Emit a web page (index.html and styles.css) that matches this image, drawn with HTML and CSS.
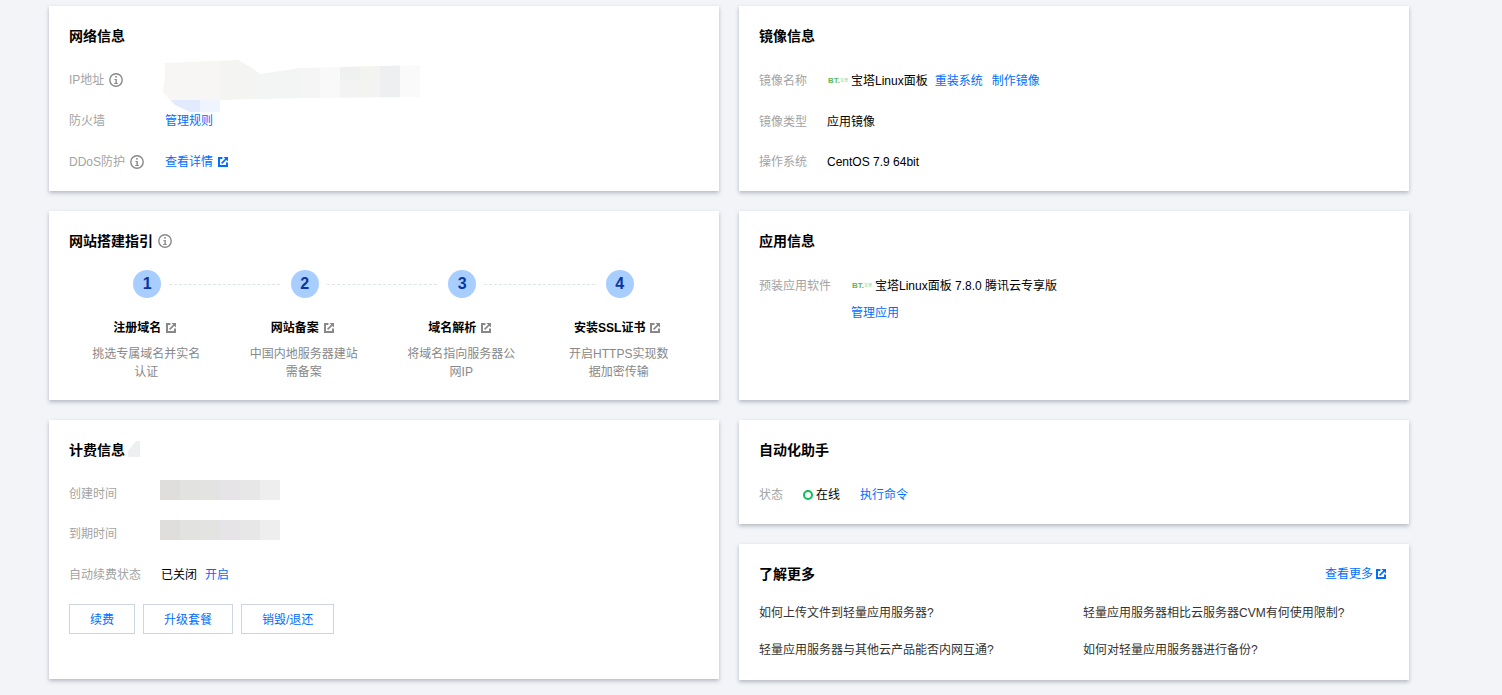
FILE: index.html
```html
<!DOCTYPE html>
<html lang="zh-CN">
<head>
    <meta charset="UTF-8">
    <meta name="viewport" content="width=device-width, initial-scale=1.0">
    <title>轻量应用服务器</title>
    <link rel="stylesheet" href="styles.css">
</head>
<body>
    <svg class="defs" width="0" height="0">
        <defs>
            <symbol id="info" viewBox="0 0 14 14">
                <circle cx="7" cy="7" r="6.2" fill="none" stroke="currentColor" stroke-width="1.4"/>
                <rect x="6.2" y="3" width="1.6" height="1.6" fill="currentColor"/>
                <path d="M5.4 6h2.4v4h1v1H5.2v-1h1.2V7h-1z" fill="currentColor"/>
            </symbol>
            <symbol id="ext" viewBox="0 0 10 10">
                <path d="M4.4 1H1v8h8V5.6" fill="none" stroke="currentColor" stroke-width="2"/>
                <path d="M3.6 6.4 8.4 1.6" fill="none" stroke="currentColor" stroke-width="1.6"/>
                <path d="M5.4 0H10v4.6z" fill="currentColor"/>
            </symbol>
        </defs>
    </svg>

    <main class="page">
        <section class="card">
            <h2 class="title">网络信息</h2>
            <div class="row gap21">
                <span class="label w96">IP地址<svg class="info"><use href="#info"/></svg></span>
                <span class="value ip">
                    <svg class="ip-blur" width="260" height="55" viewBox="0 0 260 55">
                        <defs>
                            <clipPath id="blob"><path d="M2 3 75 0 89 8 97 14 137 8 257 5V37L137 38 57 40V52H27L12 45 0 32 2 15z"/></clipPath>
                        </defs>
                        <g clip-path="url(#blob)">
                            <rect x="0" y="0" width="57" height="40" fill="#f7f6f5"/>
                            <rect x="57" y="0" width="40" height="40" fill="#f4f4f2"/>
                            <rect x="97" y="0" width="40" height="40" fill="#f3f5f5"/>
                            <rect x="137" y="0" width="20" height="40" fill="#f5f5f5"/>
                            <rect x="157" y="0" width="20" height="40" fill="#f9f9f9"/>
                            <rect x="177" y="0" width="20" height="20" fill="#eff0f0"/>
                            <rect x="177" y="20" width="20" height="20" fill="#f3f3f3"/>
                            <rect x="197" y="0" width="20" height="40" fill="#f3f3f2"/>
                            <rect x="217" y="0" width="20" height="40" fill="#eeeff0"/>
                            <rect x="237" y="0" width="20" height="40" fill="#fafafa"/>
                            <rect x="5" y="40" width="32" height="15" fill="#e2ebfd"/>
                            <rect x="37" y="40" width="20" height="15" fill="#eff4fe"/>
                        </g>
                    </svg>
                </span>
            </div>
            <div class="row gap21">
                <span class="label w96">防火墙</span>
                <a class="link" href="#">管理规则</a>
            </div>
            <div class="row">
                <span class="label w96">DDoS防护<svg class="info"><use href="#info"/></svg></span>
                <a class="link" href="#">查看详情<svg class="ext"><use href="#ext"/></svg></a>
            </div>
        </section>

        <section class="card">
            <h2 class="title mb25">镜像信息</h2>
            <div class="row gap21">
                <span class="label w68">镜像名称</span>
                <span class="bt"><b>BT.</b><i>宝塔</i></span>
                <span class="value">宝塔Linux面板</span>
                <a class="link ml7" href="#">重装系统</a>
                <a class="link ml9" href="#">制作镜像</a>
            </div>
            <div class="row">
                <span class="label w68">镜像类型</span>
                <span class="value">应用镜像</span>
            </div>
            <div class="row">
                <span class="label w68">操作系统</span>
                <span class="value">CentOS 7.9 64bit</span>
            </div>
        </section>

        <section class="card">
            <h2 class="title">网站搭建指引<svg class="info"><use href="#info"/></svg></h2>
            <div class="dots">
                <span class="dot">1</span><span class="dash"></span>
                <span class="dot">2</span><span class="dash"></span>
                <span class="dot">3</span><span class="dash"></span>
                <span class="dot">4</span>
            </div>
            <div class="steps">
                <div class="step">
                    <h3>注册域名<svg class="ext"><use href="#ext"/></svg></h3>
                    <p>挑选专属域名并实名认证</p>
                </div>
                <div class="step">
                    <h3>网站备案<svg class="ext"><use href="#ext"/></svg></h3>
                    <p>中国内地服务器建站需备案</p>
                </div>
                <div class="step">
                    <h3>域名解析<svg class="ext"><use href="#ext"/></svg></h3>
                    <p>将域名指向服务器公网IP</p>
                </div>
                <div class="step">
                    <h3>安装SSL证书<svg class="ext"><use href="#ext"/></svg></h3>
                    <p>开启HTTPS实现数据加密传输</p>
                </div>
            </div>
        </section>

        <section class="card">
            <h2 class="title mb25">应用信息</h2>
            <div class="row app-row">
                <span class="label w92">预装应用软件</span>
                <span class="bt"><b>BT.</b><i>宝塔</i></span>
                <span class="value">宝塔Linux面板 7.8.0 腾讯云专享版</span>
            </div>
            <div class="row manage">
                <a class="link" href="#">管理应用</a>
            </div>
        </section>

        <section class="card">
            <h2 class="title">计费信息<svg class="patch" width="12" height="16" viewBox="0 0 12 16"><path d="M0 16V10L8 0h4v16z" fill="#eeeff0"/></svg></h2>
            <div class="row">
                <span class="label w91">创建时间</span>
                <span class="mosaic"></span>
            </div>
            <div class="row gap21">
                <span class="label w91">到期时间</span>
                <span class="mosaic"></span>
            </div>
            <div class="row gap19">
                <span class="label w91">自动续费状态</span>
                <span class="value pl1">已关闭</span>
                <a class="link ml8" href="#">开启</a>
            </div>
            <div class="btns">
                <a class="btn" href="#">续费</a>
                <a class="btn" href="#">升级套餐</a>
                <a class="btn" href="#">销毁/退还</a>
            </div>
        </section>

        <div class="stack">
            <section class="card auto">
                <h2 class="title mb25">自动化助手</h2>
                <div class="row">
                    <span class="label w44">状态</span>
                    <span class="ring"></span>
                    <span class="value">在线</span>
                    <a class="link ml20" href="#">执行命令</a>
                </div>
            </section>
            <section class="card more">
                <div class="more-head">
                    <h2 class="title">了解更多</h2>
                    <a class="link" href="#">查看更多<svg class="ext"><use href="#ext"/></svg></a>
                </div>
                <div class="faq">
                    <a href="#">如何上传文件到轻量应用服务器?</a>
                    <a href="#">轻量应用服务器相比云服务器CVM有何使用限制?</a>
                    <a href="#">轻量应用服务器与其他云产品能否内网互通?</a>
                    <a href="#">如何对轻量应用服务器进行备份?</a>
                </div>
            </section>
        </div>
    </main>
</body>
</html>
```

FILE: styles.css
```css
*{
    box-sizing: border-box;
}
html,body{
    margin: 0;
    height: 100%;
    overflow: hidden;
}
body{
    background-color: #f2f4f8;
    color: #000;
    font-family: "Liberation Sans", "Noto Sans CJK SC", sans-serif;
    font-size: 12px;
    line-height: 20px;
}
a{
    text-decoration: none;
}
.defs{
    display: block;
}
.page{
    display: grid;
    grid-template-columns: 670px 670px;
    grid-template-rows: 185px 189px 259px;
    gap: 20px;
    padding: 6px 0 0 49px;
}
.card{
    background-color: #fff;
    box-shadow: 0 2px 4px rgba(54, 58, 80, 0.32);
    padding: 20px;
}
.title{
    display: flex;
    align-items: center;
    margin: 0 0 24px;
    font-size: 14px;
    line-height: 20px;
    font-weight: 700;
}
.mb25{
    margin-bottom: 25px;
}
.row{
    display: flex;
    align-items: center;
    height: 20px;
    margin-bottom: 20px;
}
.gap21{ margin-bottom: 21px; }
.gap19{ margin-bottom: 19px; }
.label{
    display: flex;
    align-items: center;
    flex: none;
    color: #a3a3a3;
}
.w44{ width: 44px; }
.w68{ width: 68px; }
.w91{ width: 91px; }
.w92{ width: 92px; }
.w96{ width: 96px; }
.value{
    color: #000;
}
.pl1{ padding-left: 1px; }
.ml7{ margin-left: 7px; }
.ml8{ margin-left: 8px; }
.ml9{ margin-left: 9px; }
.ml20{ margin-left: 20px; }
.link{
    display: inline-flex;
    align-items: center;
    color: #006eff;
}
.info{
    width: 14px;
    height: 14px;
    margin-left: 5px;
    color: #888;
}
.ext{
    width: 10px;
    height: 10px;
    margin-left: 5px;
    color: #006eff;
}
.ip{
    position: relative;
    display: block;
    width: 100px;
    height: 20px;
}
.ip-blur{
    position: absolute;
    left: -2px;
    top: -10px;
}
.bt{
    display: flex;
    align-items: center;
    flex: none;
    width: 24px;
    height: 8px;
    padding-left: 1px;
    font-size: 8px;
    line-height: 8px;
    white-space: nowrap;
}
.bt b{
    color: #5cb85c;
}
.bt i{
    color: #8fcf8f;
    font-style: normal;
    font-size: 4px;
}
.dots{
    display: flex;
    align-items: center;
    padding: 0 65.25px 0 64.25px;
    margin-top: -5px;
}
.dot{
    flex: none;
    width: 28px;
    height: 28px;
    border-radius: 50%;
    background-color: #a8cdff;
    color: #0a36a0;
    font-size: 16px;
    font-weight: 700;
    line-height: 28px;
    text-align: center;
}
.dash{
    flex: 1;
    margin: 0 11px 0 8px;
    border-top: 1px dashed #dfe2e6;
}
.steps{
    display: grid;
    grid-template-columns: repeat(4, 1fr);
    margin-top: 20px;
}
.step{
    display: flex;
    flex-direction: column;
    align-items: center;
}
.step h3{
    display: flex;
    align-items: center;
    margin: 0 6px 7px 0;
    font-size: 12px;
    line-height: 20px;
    font-weight: 700;
}
.step .ext{
    color: #888;
}
.step p{
    width: 110px;
    margin: 0 3px 0 0;
    color: #888;
    line-height: 18px;
    text-align: center;
}
.app-row{
    margin-bottom: 7px;
}
.manage{
    padding-left: 92px;
}
.patch{
    margin-left: 3px;
    margin-top: -2px;
}
.mosaic{
    align-self: flex-start;
    width: 120px;
    height: 20px;
    margin-top: -4px;
    background: linear-gradient(90deg, #dfdedd 0 20px, #e2e2e1 20px 40px, #e3e3e2 40px 60px, #e6e4e7 60px 80px, #e7e7e7 80px 100px, #eeeeee 100px);
}
.btns{
    display: flex;
    gap: 8px;
}
.btn{
    height: 30px;
    padding: 0 20px;
    border: 1px solid #cfd5de;
    color: #006eff;
    line-height: 30px;
}
.stack{
    display: flex;
    flex-direction: column;
    gap: 20px;
}
.auto{
    height: 104px;
}
.ring{
    flex: none;
    width: 10px;
    height: 10px;
    margin-right: 3px;
    border: 2px solid #0abf5b;
    border-radius: 50%;
}
.more{
    flex: 1;
}
.more-head{
    display: flex;
    justify-content: space-between;
    padding-right: 3px;
    margin-bottom: 19px;
}
.more-head .title{
    margin: 0;
}
.more-head .ext{
    margin-left: 3px;
}
.faq{
    display: grid;
    grid-template-columns: 1fr 1fr;
    gap: 17px 18px;
}
.faq a{
    color: #333;
}
```
